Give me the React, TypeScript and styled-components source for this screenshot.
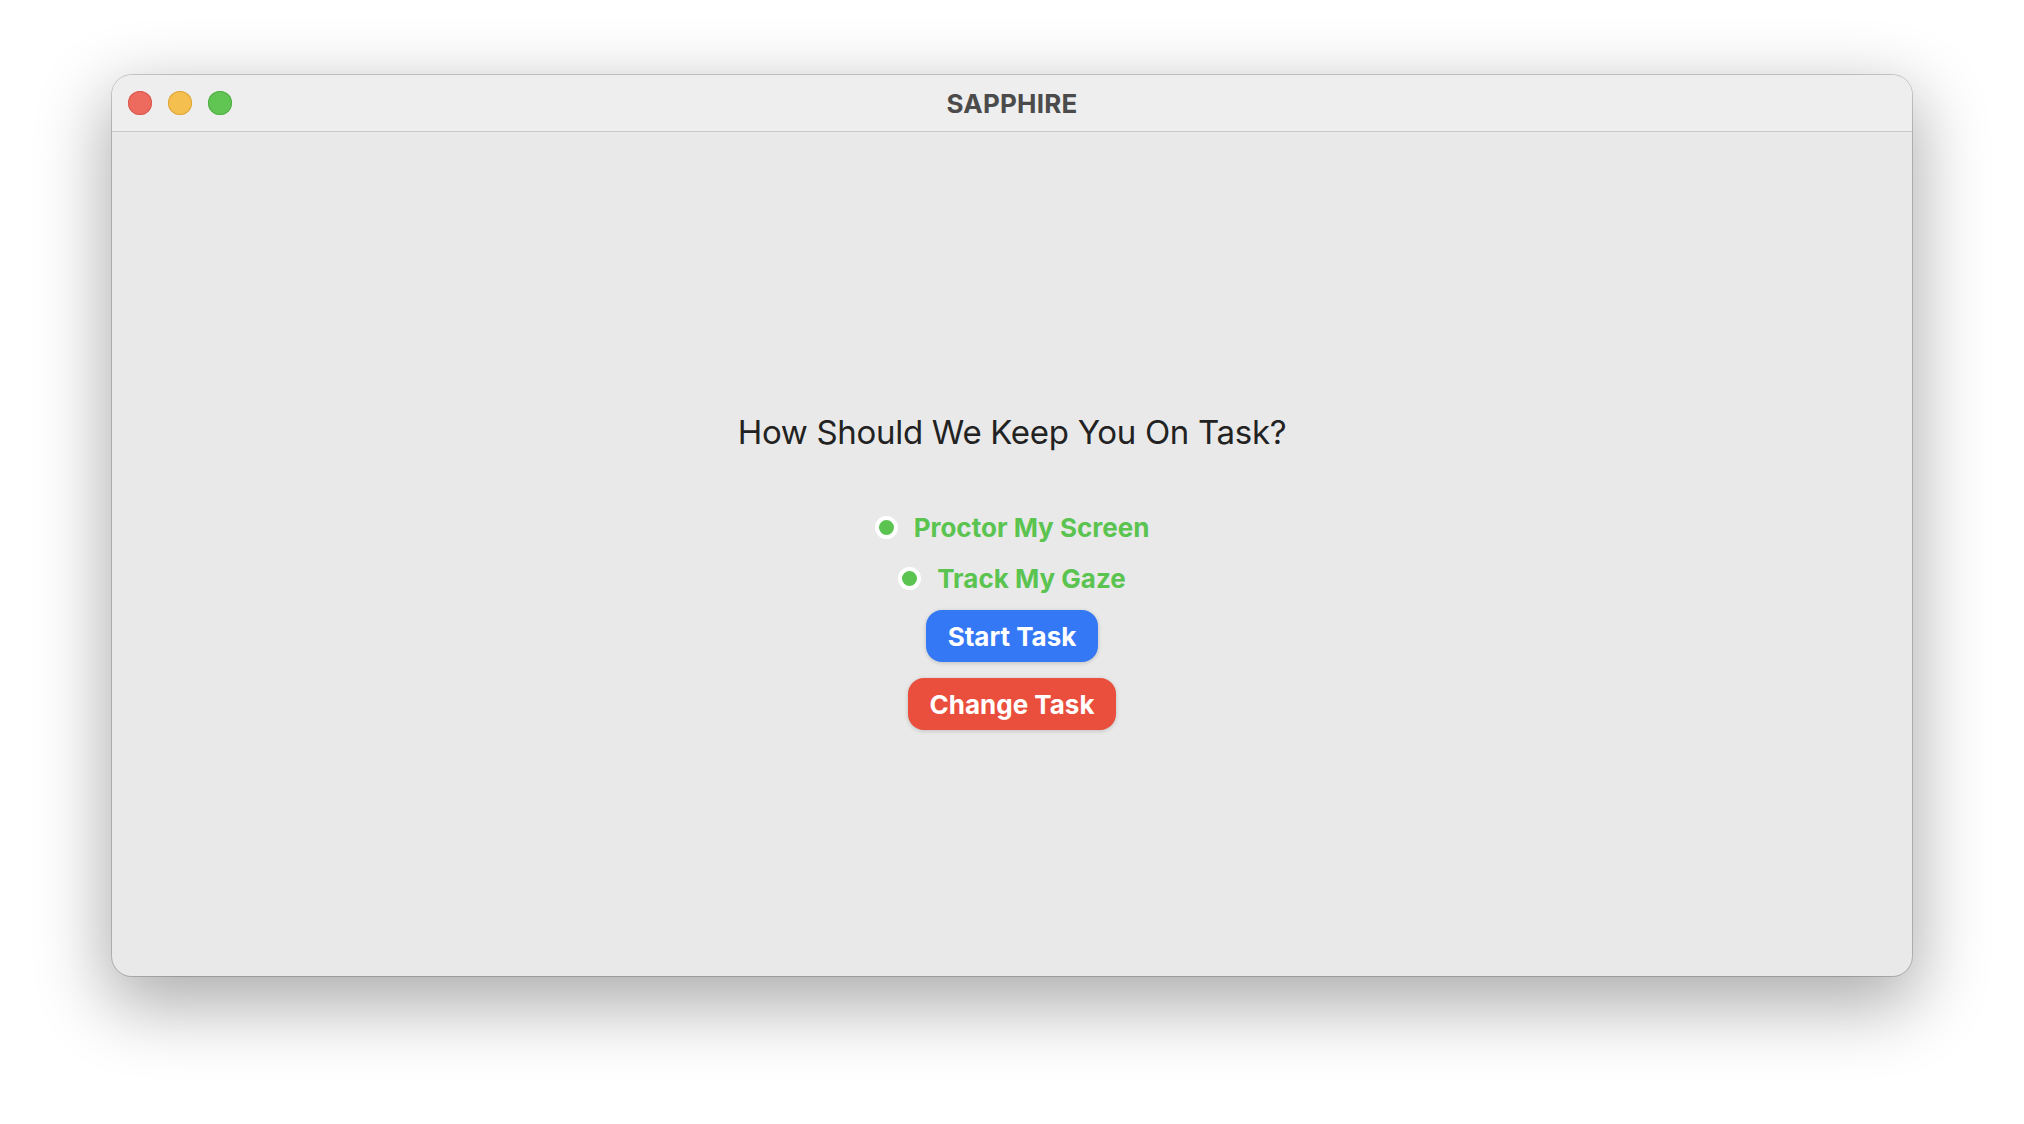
import React, { useState } from 'react';
import styled, { createGlobalStyle } from 'styled-components';

const GlobalStyle = createGlobalStyle`
  html, body {
    margin: 0;
    padding: 0;
    background: #ffffff;
  }
  body {
    font-family: Inter, "Noto Sans", "Liberation Sans", sans-serif;
    -webkit-font-smoothing: antialiased;
  }
`;

const Page = styled.div`
  width: 2024px;
  height: 1124px;
  box-sizing: border-box;
  padding: 75px 112px 148px;
  background: #ffffff;
  display: flex;
`;

const Window = styled.div`
  flex: 1;
  display: flex;
  flex-direction: column;
  border-radius: 20px;
  overflow: hidden;
  background: #e9e9e9;
  box-shadow: 0 0 0 1px rgba(0, 0, 0, 0.18), 0 24px 70px 6px rgba(0, 0, 0, 0.32);
`;

const TitleBar = styled.div`
  height: 56px;
  flex-shrink: 0;
  display: flex;
  align-items: center;
  position: relative;
  background: #eeeeee;
  border-bottom: 1px solid #c9c9c9;
  padding-left: 16px;
`;

const Lights = styled.div`
  display: flex;
  gap: 16px;
  position: relative;
  z-index: 1;
`;

const Light = styled.span<{ color: string; edge: string }>`
  width: 24px;
  height: 24px;
  border-radius: 50%;
  background: ${(p) => p.color};
  box-shadow: inset 0 0 0 1px ${(p) => p.edge};
`;

const Title = styled.div`
  position: absolute;
  inset: 0;
  display: flex;
  align-items: center;
  justify-content: center;
  font-size: 26px;
  font-weight: 700;
  color: #4b4b4b;
  letter-spacing: 0.2px;
`;

const Body = styled.div`
  flex: 1;
  display: flex;
  flex-direction: column;
  align-items: center;
  padding-top: 280px;
`;

const Heading = styled.h1`
  margin: 0 0 50px;
  font-size: 33px;
  font-weight: 400;
  letter-spacing: -0.3px;
  color: #222222;
  line-height: 40px;
`;

const Option = styled.label`
  display: flex;
  align-items: center;
  gap: 16px;
  height: 51px;
  cursor: pointer;
`;

const Radio = styled.span<{ on: boolean }>`
  width: 23px;
  height: 23px;
  box-sizing: border-box;
  border-radius: 50%;
  border: 4px solid #ffffff;
  background: ${(p) => (p.on ? '#5bc450' : '#ffffff')};
`;

const OptionText = styled.span`
  font-size: 26px;
  font-weight: 700;
  color: #5bc450;
`;

const Button = styled.button<{ tone: string }>`
  height: 52px;
  padding: 0 22px;
  border: none;
  border-radius: 16px;
  background: ${(p) => p.tone};
  color: #ffffff;
  font-family: inherit;
  font-size: 26px;
  font-weight: 700;
  box-shadow: 0 1px 4px rgba(0, 0, 0, 0.18);
  cursor: pointer;
`;

const Buttons = styled.div`
  display: flex;
  flex-direction: column;
  align-items: center;
  gap: 16px;
  margin-top: 6px;
`;

export default function App() {
  const [proctor, setProctor] = useState(true);
  const [gaze, setGaze] = useState(true);
  return (
    <>
      <GlobalStyle />
      <Page>
        <Window>
          <TitleBar>
            <Lights>
              <Light color="#ed6a5e" edge="#d85a4f" />
              <Light color="#f5bf4f" edge="#dca63a" />
              <Light color="#61c554" edge="#50ad43" />
            </Lights>
            <Title>SAPPHIRE</Title>
          </TitleBar>
          <Body>
            <Heading>How Should We Keep You On Task?</Heading>
            <Option onClick={() => setProctor((v) => !v)}>
              <Radio on={proctor} />
              <OptionText>Proctor My Screen</OptionText>
            </Option>
            <Option onClick={() => setGaze((v) => !v)}>
              <Radio on={gaze} />
              <OptionText>Track My Gaze</OptionText>
            </Option>
            <Buttons>
              <Button tone="#3478f6">Start Task</Button>
              <Button tone="#ea4e3d">Change Task</Button>
            </Buttons>
          </Body>
        </Window>
      </Page>
    </>
  );
}
